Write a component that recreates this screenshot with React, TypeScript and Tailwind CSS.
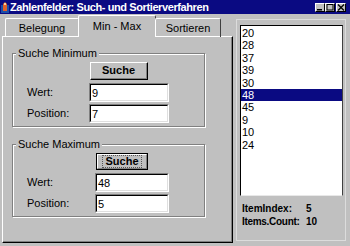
import React from "react";

const values = ["20", "28", "37", "39", "30", "48", "45", "9", "10", "24"];

function TitleButton({ kind }: { kind: "min" | "max" | "close" }) {
  return (
    <div className="w-[10px] h-[9px] bg-[#c0c0c0] border-t border-l border-t-white border-l-white border-r border-b border-r-black border-b-black flex items-center justify-center">
      <svg width="8" height="7" viewBox="0 0 8 7">
        {kind === "min" && <rect x="1" y="5" width="5" height="1.5" fill="#000" />}
        {kind === "max" && <rect x="1" y="0.5" width="6" height="5.5" fill="none" stroke="#000" strokeWidth="1" />}
        {kind === "close" && <path d="M1 0.5 L7 6.5 M7 0.5 L1 6.5" stroke="#000" strokeWidth="1.3" />}
      </svg>
    </div>
  );
}

function Sunken({ value, className }: { value: string; className: string }) {
  return (
    <div className={`h-[19px] bg-white border-t border-l border-t-[#808080] border-l-[#808080] border-r border-b border-r-white border-b-white ${className}`}>
      <div className="h-full border-t border-l border-t-black border-l-black border-r border-b border-r-[#dfdfdf] border-b-[#dfdfdf] px-[1px] text-[11px] leading-[16px] text-black">
        {value}
      </div>
    </div>
  );
}

function Group({
  title,
  min,
  wert,
  pos,
}: {
  title: string;
  min?: boolean;
  wert: string;
  pos: string;
}) {
  return (
    <fieldset className="ml-[9px] w-[193px] border border-[#808080] shadow-[1px_1px_0_#fff,inset_1px_1px_0_#fff] px-0">
      <legend className="ml-[3px] px-[2px] bg-[#c0c0c0] text-[11px] leading-[14px] text-black">
        {title}
      </legend>
      <div className="flex flex-col gap-[1px] pt-[2px]">
        {min ? (
          <div className="ml-[77px] w-[58px] h-[18px] bg-[#c0c0c0] border-t border-l border-t-white border-l-white border-r border-b border-r-black border-b-black">
            <div className="h-full border-r border-b border-r-[#808080] border-b-[#808080] flex items-center justify-center text-[11px] font-bold text-black">
              Suche
            </div>
          </div>
        ) : (
          <div className="ml-[83px] w-[52px] h-[17px] border border-black">
            <div className="h-full bg-[#c0c0c0] border-t border-l border-t-white border-l-white border-r border-b border-r-[#808080] border-b-[#808080] flex items-center justify-center text-[11px] font-bold text-black">
              <span className="outline outline-1 outline-dotted outline-[#555] px-[2px] leading-[11px]">Suche</span>
            </div>
          </div>
        )}
        <div className="flex items-center mt-[2px]">
          <span className={`ml-[14px] ${min ? "w-[62px]" : "w-[68px]"} text-[11px] text-black`}>Wert:</span>
          <Sunken value={wert} className={min ? "w-[80px]" : "w-[74px]"} />
        </div>
        <div className="flex items-center mt-[1px] mb-[3px]">
          <span className={`ml-[14px] ${min ? "w-[62px]" : "w-[68px]"} text-[11px] text-black`}>Position:</span>
          <Sunken value={pos} className={min ? "w-[80px]" : "w-[74px]"} />
        </div>
      </div>
    </fieldset>
  );
}

export default function App() {
  return (
    <div className="w-[350px] h-[246px] bg-[#c0c0c0] flex flex-col overflow-hidden font-['Liberation_Sans',Arial,sans-serif] select-none">
      {/* title bar */}
      <div className="h-[14px] bg-[#0a0a82] flex items-center pl-[1px] pr-[4px]">
        <svg width="8" height="11" viewBox="0 0 8 11" className="mr-[1px]">
          <rect x="0" y="3" width="8" height="8" fill="#1c4fa8" />
          <path d="M2 2 L4 0 L6 2 L6 9 L2 9 Z" fill="#e0602a" />
          <circle cx="4" cy="2" r="1" fill="#fff2c0" />
        </svg>
        <span className="text-white font-bold text-[11px] leading-[14px] tracking-[-0.4px] whitespace-nowrap">
          Zahlenfelder: Such- und Sortierverfahren
        </span>
        <div className="ml-auto flex">
          <TitleButton kind="min" />
          <TitleButton kind="max" />
          <div className="ml-[1px]">
            <TitleButton kind="close" />
          </div>
        </div>
      </div>

      <div className="flex-1 flex">
        {/* left: page control */}
        <div className="w-[233px] flex flex-col pl-[2px] pb-[3px]">
          <div className="h-[22px] flex items-end pl-[3px] relative z-10">
            <div className="w-[74px] h-[19px] mb-[-1px] border-t border-l border-t-white border-l-white border-r border-r-[#404040] rounded-t-[2px] flex items-center justify-center text-[11px] text-black">
              Belegung
            </div>
            <div className="w-[78px] h-[22px] mb-[-1px] -mx-[1px] bg-[#c0c0c0] border-t border-l border-t-white border-l-white border-r border-r-[#404040] rounded-t-[2px] flex items-center justify-center text-[11px] text-black pb-[1px]">
              Min - Max
            </div>
            <div className="w-[66px] h-[19px] mb-[-1px] border-t border-l border-t-white border-l-white border-r border-r-[#404040] rounded-t-[2px] flex items-center justify-center text-[11px] text-black">
              Sortieren
            </div>
          </div>
          <div className="flex-1 border-t border-l border-t-white border-l-white border-r border-b border-r-black border-b-black">
            <div className="h-full border-r border-b border-r-[#808080] border-b-[#808080] pt-[9px] flex flex-col gap-[10px]">
              <Group title="Suche Minimum" min wert="9" pos="7" />
              <Group title="Suche Maximum" wert="48" pos="5" />
            </div>
          </div>
        </div>

        {/* right: list and counters */}
        <div className="flex-1 pl-[3px] pr-[4px] pt-[5px] pb-[5px] flex">
          <div className="flex-1 border border-[#dcdcdc] pl-[3px] pr-[2px] pt-[5px] flex flex-col">
            <div className="h-[171px] bg-white border-t border-l border-t-black border-l-black border-r border-b border-r-[#404040] border-b-[#e8e8e8] flex flex-col pt-[1px]">
              {values.map((v, i) => (
                <div
                  key={i}
                  className={`h-[12.4px] leading-[12.4px] text-[11px] pl-[1px] ${i === 5 ? "bg-[#0a0a82] text-white" : "text-black"}`}
                >
                  {v}
                </div>
              ))}
            </div>
            <div className="mt-[7px] pl-[2px] text-[10px] font-bold text-black flex flex-col gap-[1px] leading-[12px]">
              <div className="flex">
                <span className="w-[64px]">ItemIndex:</span>
                <span>5</span>
              </div>
              <div className="flex">
                <span className="w-[64px] tracking-[-0.3px]">Items.Count:</span>
                <span>10</span>
              </div>
            </div>
          </div>
        </div>
      </div>
    </div>
  );
}
